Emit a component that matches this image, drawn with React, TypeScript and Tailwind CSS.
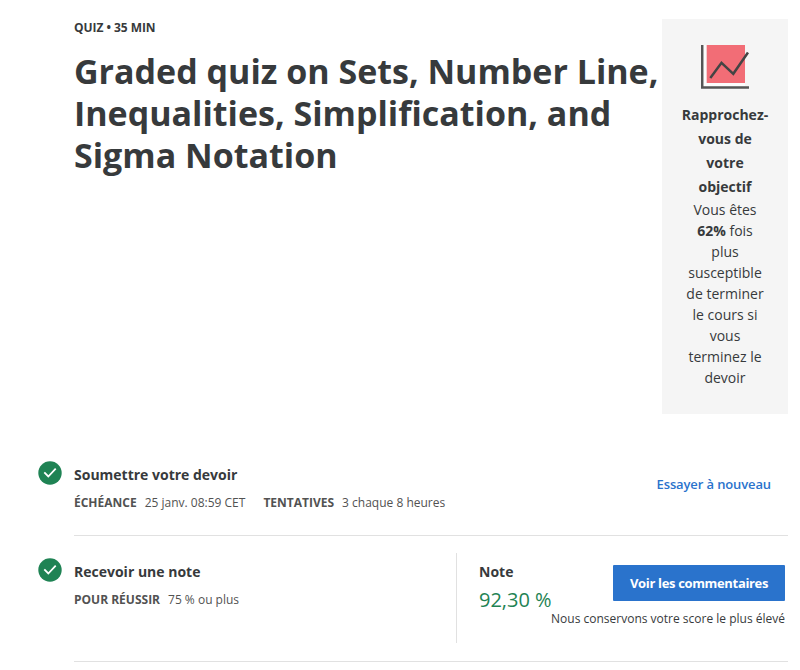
function Check() {
  return (
    <svg width="24" height="24" viewBox="0 0 24 24" className="shrink-0">
      <circle cx="12" cy="12" r="11.7" fill="#1f8354" />
      <path d="M6.3 11.4l4 4.1 7.4-7.8" fill="none" stroke="#fff" strokeWidth="1.8" />
    </svg>
  );
}

export default function App() {
  return (
    <div className="h-[670px] w-[800px] overflow-hidden bg-white pl-[38px] pr-3 pt-[19px] font-['Open_Sans','Noto_Sans',sans-serif] text-[#373a3c]">
      <header className="flex h-[395px] pl-9">
        <div className="w-[588px] shrink-0">
          <p className="text-[12px] font-bold leading-[18px] tracking-[-0.05px]">QUIZ • 35 MIN</p>
          <h1 className="mt-[13px] whitespace-nowrap text-[34px] font-bold leading-[42px]">
            Graded quiz on Sets, Number Line,<br />Inequalities, Simplification, and<br />Sigma Notation
          </h1>
        </div>
        <aside className="w-[126px] bg-[#f5f5f5] pt-[25px] text-center">
          <svg width="48" height="46" viewBox="0 0 48 46" className="mx-auto block">
            <path d="M2.5 1h3v38H44v3H2.5z" fill="#fcfcfc" />
            <rect x="5.7" y="1" width="38.3" height="38" fill="#f26d76" />
            <path d="M1.2 1v42.5H48" fill="none" stroke="#555" strokeWidth="2.5" />
            <path d="M9.3 34l11.2-15.2 11.8 11L47 8.5" fill="none" stroke="#444" strokeWidth="2.5" />
          </svg>
          <h2 className="mt-[13px] text-[14px] font-bold leading-6">Rapprochez-<br />vous de<br />votre<br />objectif</h2>
          <p className="text-[14px] leading-[21px]">Vous êtes<br /><b>62%</b> fois<br />plus<br />susceptible<br />de terminer<br />le cours si<br />vous<br />terminez le<br />devoir</p>
        </aside>
      </header>
      <section className="mt-[47px] flex h-[75px] gap-3">
        <Check />
        <div className="flex flex-1 justify-between border-b border-[#e1e1e1]">
          <div>
            <h3 className="mt-[3px] text-[14px] font-bold leading-[21px]">Soumettre votre devoir</h3>
            <p className="mt-[9px] flex text-[12px] leading-[18px] text-[#525252]">
              <b className="mr-2 font-bold">ÉCHÉANCE</b>25 janv. 08:59 CET
              <b className="ml-[18px] mr-2 font-bold">TENTATIVES</b>3 chaque 8 heures
            </p>
          </div>
          <a className="mr-[17px] mt-[13px] text-[13px] font-semibold leading-5 tracking-[-0.12px] text-[#2a73cc]">Essayer à nouveau</a>
        </div>
      </section>
      <section className="mt-[22px] flex h-[104px] gap-3">
        <Check />
        <div className="flex flex-1 border-b border-[#e1e1e1]">
          <div className="w-[382px]">
            <h3 className="mt-[3px] text-[14px] font-bold leading-[21px]">Recevoir une note</h3>
            <p className="mt-[9px] flex text-[12px] leading-[18px] text-[#525252]"><b className="mr-2 font-bold">POUR RÉUSSIR</b>75 % ou plus</p>
          </div>
          <div className="-mt-[5px] flex h-[90px] flex-1 border-l border-[#e1e1e1] pl-[22px]">
            <div className="w-[72px] shrink-0 whitespace-nowrap pt-2">
              <h3 className="text-[14px] font-bold leading-[21px]">Note</h3>
              <p className="mt-1 text-[20px] leading-[28px] text-[#1f8354]">92,30 %</p>
            </div>
            <div className="flex flex-1 flex-col items-end whitespace-nowrap pr-[3px] pt-3">
              <button className="h-9 w-[172px] rounded-[1px] bg-[#2a73cc] pt-px text-[13px] font-bold tracking-[-0.34px] text-white">Voir les commentaires</button>
              <p className="mt-[9px] text-[12px] leading-[18px]">Nous conservons votre score le plus élevé</p>
            </div>
          </div>
        </div>
      </section>
    </div>
  );
}
